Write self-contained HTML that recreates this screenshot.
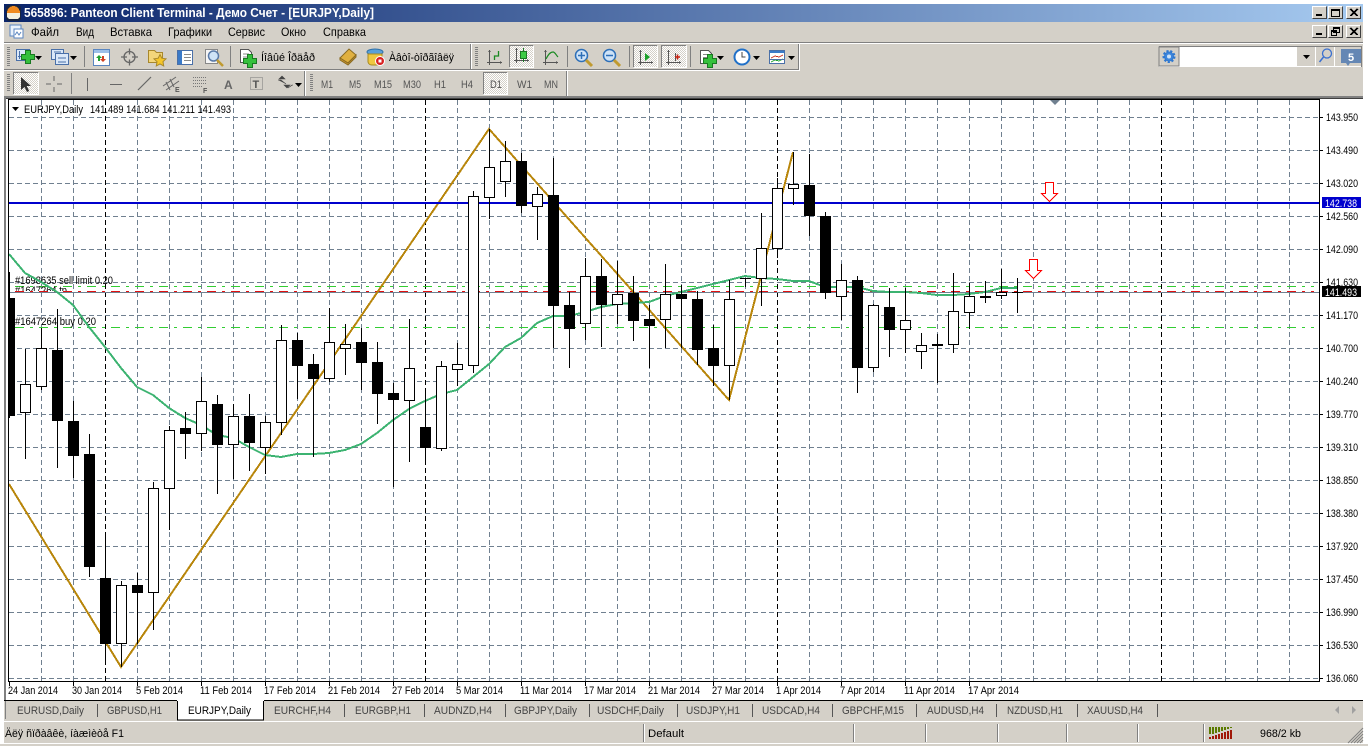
<!DOCTYPE html>
<html><head><meta charset="utf-8"><title>565896: Panteon Client Terminal</title>
<style>
html,body{margin:0;padding:0;background:#fff;overflow:hidden}
svg{display:block}
text{font-family:"Liberation Sans",sans-serif;font-size:11px;fill:#000}
.m{font-size:12px}
.g{fill:#555}
.t{fill:#444}
.c{shape-rendering:crispEdges}
</style></head><body>
<svg width="1368" height="746" viewBox="0 0 1368 746" xmlns="http://www.w3.org/2000/svg">
<defs>
<linearGradient id="tb" x1="0" x2="1" y1="0" y2="0"><stop offset="0" stop-color="#0a246a"/><stop offset="1" stop-color="#a6caf0"/></linearGradient>
<pattern id="d" width="2" height="2" patternUnits="userSpaceOnUse"><rect width="2" height="2" fill="#fff"/><rect width="1" height="1" fill="#d4d0c8"/><rect x="1" y="1" width="1" height="1" fill="#d4d0c8"/></pattern>
<clipPath id="tp"><rect x="14" y="285" width="60" height="6"/></clipPath>
<g id="plus"><path d="M-2.500-6.500h5v4h4v5h-4v4h-5v-4h-4v-5h4z" fill="#35c03c" stroke="#1a7a22"/></g>
<path id="dn" d="M0 0h7l-3.500 4z" fill="#000"/>
<g id="axes"><path d="M2.500 0v15M0 12.500h15" fill="none" stroke="#555"/><path d="M1 2l1.500-2 1.500 2zM13 11l2 1.500-2 1.500z" fill="#555"/></g>
<g id="mag"><circle cx="6.500" cy="6.500" r="6" fill="#cfe3f7" stroke="#2d6fb8" stroke-width="1.500"/><path d="M11 11l6 6" stroke="#c09a30" stroke-width="3"/></g>
</defs>

<rect width="1368" height="746" fill="#fff"/>
<rect x="4" y="4" width="1359" height="739" fill="#d4d0c8"/>
<rect x="4" y="743" width="1359" height="1" fill="#fff"/>
<rect x="0" y="744" width="1368" height="2" fill="#d4d0c8"/>

<!-- title bar -->
<rect x="4" y="4" width="1359" height="18" fill="url(#tb)"/>
<g class="c">
<rect x="6" y="5" width="15" height="16" rx="3" fill="#182440"/>
<path d="M7 13a6.500 7 0 0 1 13 0z" fill="#f08a20"/><path d="M7 13h13v3a3 3 0 0 1-3 3h-7a3 3 0 0 1-3-3z" fill="#f4f0e0"/>
</g>
<text x="24" y="17" textLength="350" lengthAdjust="spacingAndGlyphs" style="font-size:13px;font-weight:700;fill:#fff;font-family:'Liberation Sans','Noto Sans CJK SC',sans-serif">565896: Panteon Client Terminal - Демо Счет - [EURJPY,Daily]</text>

<!-- window buttons -->
<g class="c" fill="none">
<rect x="1312" y="6" width="15" height="13" fill="#d4d0c8"/><path d="M1312.500 18.500V6.500H1326.500" stroke="#fff"/><path d="M1312.500 18.500H1326.500V6.500" stroke="#404040"/><rect x="1316" y="14" width="6" height="2" fill="#000"/>
<rect x="1328" y="6" width="15" height="13" fill="#d4d0c8"/><path d="M1328.500 18.500V6.500H1342.500" stroke="#fff"/><path d="M1328.500 18.500H1342.500V6.500" stroke="#404040"/><path d="M1331.500 9.500h8v7h-8zM1331.500 10.500h8" stroke="#000"/>
<rect x="1346" y="6" width="15" height="13" fill="#d4d0c8"/><path d="M1346.500 18.500V6.500H1360.500" stroke="#fff"/><path d="M1346.500 18.500H1360.500V6.500" stroke="#404040"/><path d="M1350 9l7 7M1351 9l7 7M1357 9l-7 7M1358 9l-7 7" stroke="#000"/>
<rect x="1312" y="25" width="15" height="13" fill="#d4d0c8"/><path d="M1312.500 37.500V25.500H1326.500" stroke="#fff"/><path d="M1312.500 37.500H1326.500V25.500" stroke="#404040"/><rect x="1316" y="33" width="6" height="2" fill="#000"/>
<rect x="1328" y="25" width="15" height="13" fill="#d4d0c8"/><path d="M1328.500 37.500V25.500H1342.500" stroke="#fff"/><path d="M1328.500 37.500H1342.500V25.500" stroke="#404040"/><path d="M1333.500 27.500h6v5h-6zM1331.500 30.500h5v5h-5z" stroke="#000"/><path d="M1333 28.500h6M1331 31.500h5" stroke="#000"/>
<rect x="1346" y="25" width="15" height="13" fill="#d4d0c8"/><path d="M1346.500 37.500V25.500H1360.500" stroke="#fff"/><path d="M1346.500 37.500H1360.500V25.500" stroke="#404040"/><path d="M1350 28l7 7M1351 28l7 7M1357 28l-7 7M1358 28l-7 7" stroke="#000"/>
</g>

<!-- menu -->
<g>
<rect x="10" y="25" width="11" height="11" fill="#eaf2fb" stroke="#5b86c0"/><rect x="14" y="29" width="9" height="9" fill="#fff" stroke="#5b86c0"/><path d="M15 35l2-3 2 3 2-3" fill="none" stroke="#5b86c0"/>
<text class="m" x="31" y="36" textLength="28" lengthAdjust="spacingAndGlyphs">Файл</text>
<text class="m" x="76" y="36" textLength="18" lengthAdjust="spacingAndGlyphs">Вид</text>
<text class="m" x="110" y="36" textLength="42" lengthAdjust="spacingAndGlyphs">Вставка</text>
<text class="m" x="168" y="36" textLength="44" lengthAdjust="spacingAndGlyphs">Графики</text>
<text class="m" x="228" y="36" textLength="37" lengthAdjust="spacingAndGlyphs">Сервис</text>
<text class="m" x="281" y="36" textLength="25" lengthAdjust="spacingAndGlyphs">Окно</text>
<text class="m" x="323" y="36" textLength="43" lengthAdjust="spacingAndGlyphs">Справка</text>
</g>

<!-- toolbar chrome -->
<g class="c">
<rect x="4" y="42" width="1359" height="1" fill="#808080"/><rect x="4" y="43" width="1359" height="1" fill="#fff"/>
<rect x="4" y="69" width="795" height="1" fill="#808080"/><rect x="4" y="70" width="796" height="1" fill="#fff"/><rect x="799" y="44" width="1" height="26" fill="#fff"/><rect x="798" y="44" width="1" height="25" fill="#808080"/>
<rect x="305" y="71" width="1" height="25" fill="#fff"/><rect x="304" y="71" width="1" height="25" fill="#808080"/>
<rect x="566" y="71" width="1" height="25" fill="#808080"/><rect x="567" y="71" width="1" height="25" fill="#fff"/>
<!-- grips -->
<path d="M7 47.500h3M7 49.500h3M7 51.500h3M7 53.500h3M7 55.500h3M7 57.500h3M7 59.500h3M7 61.500h3M7 63.500h3M7 65.500h3M475 47.500h3M475 49.500h3M475 51.500h3M475 53.500h3M475 55.500h3M475 57.500h3M475 59.500h3M475 61.500h3M475 63.500h3M475 65.500h3M7 74.500h3M7 76.500h3M7 78.500h3M7 80.500h3M7 82.500h3M7 84.500h3M7 86.500h3M7 88.500h3M7 90.500h3M310 74.500h3M310 76.500h3M310 78.500h3M310 80.500h3M310 82.500h3M310 84.500h3M310 86.500h3M310 88.500h3M310 90.500h3" stroke="#808080"/>
<!-- separators -->
<path d="M84.500 46v21M230.500 46v21M567.500 46v21M629.500 46v21M690.500 46v21M71.500 73v21M470.500 44v25" stroke="#808080"/>
<path d="M471.500 44v25" stroke="#fff"/>
<!-- selected buttons -->
<rect x="509" y="45" width="25" height="23" fill="url(#d)"/><path d="M509.500 67.500V45.500H533.500" fill="none" stroke="#808080"/><path d="M509.500 67.500H533.500V45.500" fill="none" stroke="#fff"/>
<rect x="633" y="45" width="25" height="23" fill="url(#d)"/><path d="M633.500 67.500V45.500H657.500" fill="none" stroke="#808080"/><path d="M633.500 67.500H657.500V45.500" fill="none" stroke="#fff"/>
<rect x="661" y="45" width="26" height="23" fill="url(#d)"/><path d="M661.500 67.500V45.500H686.500" fill="none" stroke="#808080"/><path d="M661.500 67.500H686.500V45.500" fill="none" stroke="#fff"/>
<rect x="13" y="72" width="26" height="23" fill="url(#d)"/><path d="M13.500 94.500V72.500H38.500" fill="none" stroke="#808080"/><path d="M13.500 94.500H38.500V72.500" fill="none" stroke="#fff"/>
<rect x="483" y="72" width="25" height="23" fill="url(#d)"/><path d="M483.500 94.500V72.500H507.500" fill="none" stroke="#808080"/><path d="M483.500 94.500H507.500V72.500" fill="none" stroke="#fff"/>
</g>

<!-- toolbar 1 icons -->
<g>
<g class="c"><rect x="16.500" y="49.500" width="13" height="11" fill="#dbe8f8" stroke="#4a70a8"/><path d="M19.500 51v8M18 56.500h10" stroke="#4a70a8"/></g><use href="#plus" x="28" y="57"/>
<use href="#dn" x="35" y="56"/>
<g class="c"><rect x="51.500" y="49.500" width="12" height="10" fill="#dbe8f8" stroke="#4a70a8"/><rect x="55.500" y="53.500" width="13" height="11" fill="#dbe8f8" stroke="#4a70a8"/><path d="M54 52h7M58 58h8M58 62h8" stroke="#4a70a8"/></g>
<use href="#dn" x="70" y="56"/>
<g class="c"><rect x="93.500" y="49.500" width="16" height="16" fill="#fff" stroke="#5a86c0"/><rect x="94" y="50" width="15" height="3" fill="#9dbfe8"/></g>
<path d="M99 55l3 3h-2v3h-2v-3h-2z" fill="#22a030"/><path d="M103 62l-3-3h2v-3h2v3h2z" fill="#d04020"/>
<g fill="none" stroke="#666" stroke-width="1.300"><circle cx="129.500" cy="57" r="5.500"/><path d="M129.500 48.500v6M129.500 59.500v6M121 57h6M132 57h6"/></g>
<path d="M148.500 50.500h6l2 2h6v10h-14z" fill="#f3d67a" stroke="#a8882c"/><path d="M160 54.500l1.800 3.700 4.200.6-3 2.900.7 4.200-3.700-2-3.700 2 .7-4.200-3-2.900 4.200-.6z" fill="#f5c62a" stroke="#a8882c"/>
<g class="c"><rect x="177.500" y="50.500" width="15" height="14" fill="#fff" stroke="#4a70a8"/><rect x="178" y="51" width="4" height="13" fill="#3a7ac8"/><path d="M184 54.500h7M184 57.500h7M184 60.500h7" stroke="#8a8a8a"/></g>
<g class="c"><rect x="205.500" y="49.500" width="12" height="14" fill="#f6f6f6" stroke="#888"/></g><circle cx="213.500" cy="56" r="5" fill="#cfe3f7" stroke="#5a7aa8" stroke-width="1.500"/><path d="M217 60l6 6" stroke="#c09a30" stroke-width="2.500"/>
<g class="c"><path d="M240.500 49.500h8l3 3v10h-11z" fill="#fff" stroke="#555"/><path d="M243 54h6M243 57h6" stroke="#888"/></g><use href="#plus" x="250" y="61"/>
<text x="261" y="61" textLength="54" lengthAdjust="spacingAndGlyphs">Íîâûé Îðäåð</text>
<path d="M340 58l9-9 7 6-8 8z" fill="#e0b040" stroke="#8a6a20"/><path d="M340 58l8 5 8-8v2l-8 8-8-5z" fill="#c89530" stroke="#8a6a20"/>
<ellipse cx="375" cy="52" rx="8" ry="3" fill="#5aa0d8" stroke="#3070a8"/><path d="M368 54h14v8a4 4 0 0 1-4 3h-6a4 4 0 0 1-4-3z" fill="#f0c840" stroke="#a88a20"/><circle cx="380" cy="61" r="4.500" fill="#d82020" stroke="#fff"/><rect x="378.500" y="59.500" width="3" height="3" fill="#fff"/>
<text x="389" y="61" textLength="65" lengthAdjust="spacingAndGlyphs">Àâòî-òîðãîâëÿ</text>

<g transform="translate(487,50)"><use href="#axes"/><path d="M7.500 10V6h4V1" fill="none" stroke="#1a8a22" stroke-width="1.300"/></g>
<g transform="translate(514,48)"><use href="#axes"/><path d="M9.500 0v14" stroke="#1a7a22"/><rect x="6.500" y="3.500" width="6" height="7" fill="#3ccc44" stroke="#1a7a22"/></g>
<g transform="translate(543,50)"><use href="#axes"/><path d="M3 9c3-6 5-7 7-7s3 3 5 5" fill="none" stroke="#1a8a22" stroke-width="1.200"/></g>
<use href="#mag" x="575" y="49"/><path d="M578 55.500h7M581.500 52v7" stroke="#2d6fb8" stroke-width="1.500"/>
<use href="#mag" x="603" y="49"/><path d="M606 55.500h7" stroke="#2d6fb8" stroke-width="1.500"/>
<g transform="translate(638,50)"><use href="#axes"/><path d="M7 3v8l5-4z" fill="#1aa028"/></g>
<g transform="translate(666,50)"><use href="#axes"/><path d="M9.500 3v8" stroke="#555"/><path d="M9 7h5M11.500 4.500v5" stroke="#c82010" stroke-width="1.500"/></g>
<g class="c"><path d="M700.500 50.500h8l3 3v10h-11z" fill="#fff" stroke="#555"/><path d="M703 54.500h4M703 57.500h4" stroke="#888"/></g><use href="#plus" x="710" y="61"/>
<use href="#dn" x="717" y="56"/>
<circle cx="742" cy="57" r="7.500" fill="#fff" stroke="#2070c8" stroke-width="2"/><path d="M742 52v5h3.500" fill="none" stroke="#444"/>
<use href="#dn" x="753" y="56"/>
<g class="c"><rect x="769.500" y="50.500" width="15" height="13" fill="#fff" stroke="#4a70a8"/><rect x="770" y="51" width="14" height="2" fill="#3a7ac8"/><path d="M771 58l4-2 4 1 4-2" fill="none" stroke="#c83020"/><path d="M771 62l4-2 4 1 4-2" fill="none" stroke="#20a030"/><path d="M770 59.500h14" stroke="#4a70a8"/></g>
<use href="#dn" x="788" y="56"/>
</g>

<!-- toolbar 2 icons -->
<g>
<path d="M21 77v13l3.500-3 2.500 5 2.200-1-2.500-5h4.300z" fill="#333"/>
<path d="M54 76v5M54 87v5M46 84h5M57 84h5" stroke="#666" class="c"/>
<path d="M87.500 78v13" stroke="#666" class="c"/>
<path d="M110 84.500h12" stroke="#666" class="c"/>
<path d="M138 90l13-13" stroke="#666" stroke-width="1.200"/>
<path d="M163 86l13-9M166 90l13-9M166 82l4 8M170 79l4 8" stroke="#666" fill="none"/>
<text x="175" y="92" style="font-size:7px;font-weight:700;fill:#555">E</text>
<path d="M193 77.500h14M193 80.500h14M193 83.500h14M193 86.500h10" stroke="#777" stroke-dasharray="1 1" class="c"/>
<text x="203" y="93" style="font-size:7px;font-weight:700;fill:#555">F</text>
<text x="224" y="89" style="font-size:12px;font-weight:700;fill:#666">A</text>
<rect x="250.500" y="77.500" width="12" height="12" fill="none" stroke="#777" stroke-dasharray="1 1" class="c"/>
<text x="252.500" y="88" style="font-size:11px;font-weight:700;fill:#555">T</text>
<path d="M279 79l3-3 3 3zM284 85l3 3 3-3zM278 80h3l5 4M288 88l4-3 1 0" fill="#444" stroke="#444" stroke-width=".6"/>
<use href="#dn" x="295" y="83"/>
<text class="g" x="321" y="88" textLength="12" lengthAdjust="spacingAndGlyphs">M1</text>
<text class="g" x="349" y="88" textLength="12" lengthAdjust="spacingAndGlyphs">M5</text>
<text class="g" x="374" y="88" textLength="18" lengthAdjust="spacingAndGlyphs">M15</text>
<text class="g" x="403" y="88" textLength="18" lengthAdjust="spacingAndGlyphs">M30</text>
<text class="g" x="434" y="88" textLength="12" lengthAdjust="spacingAndGlyphs">H1</text>
<text class="g" x="461" y="88" textLength="12" lengthAdjust="spacingAndGlyphs">H4</text>
<text class="g" x="490" y="88" textLength="12" lengthAdjust="spacingAndGlyphs">D1</text>
<text class="g" x="517" y="88" textLength="15" lengthAdjust="spacingAndGlyphs">W1</text>
<text class="g" x="544" y="88" textLength="14" lengthAdjust="spacingAndGlyphs">MN</text>
</g>

<!-- search panel -->
<g class="c">
<rect x="1159" y="46" width="202" height="21" fill="#fff"/>
<rect x="1159" y="46" width="202" height="1" fill="#808080"/>
<rect x="1159" y="47" width="20" height="19" fill="#d4d0c8" stroke="#808080" stroke-width=".6"/>
<rect x="1297" y="47" width="18" height="19" fill="#d4d0c8"/>
<rect x="1316" y="47" width="18" height="19" fill="#d4d0c8"/>
<rect x="1335" y="47" width="26" height="19" fill="#d4d0c8"/>
<rect x="1361" y="46" width="1" height="21" fill="#808080"/>
</g>
<g>
<circle cx="1169" cy="56.500" r="5" fill="#2f78d0" stroke="#2f78d0" stroke-width="3" stroke-dasharray="2 1.500"/><circle cx="1169" cy="56.500" r="4" fill="#3d86dc"/><circle cx="1169" cy="56.500" r="2" fill="#cfe3f7"/>
<use href="#dn" x="1303" y="55"/>
<circle cx="1327" cy="53.500" r="4.500" fill="none" stroke="#3a70d0" stroke-width="1.300"/><path d="M1323.500 57l-4 5" stroke="#3a70d0" stroke-width="1.500"/>
<path d="M1341 49h20v14h-11l-2 3-2-3h-5z" fill="#6587b4"/>
<text x="1348" y="61" style="font-size:11px;font-weight:700;fill:#fff">5</text>
</g>

<!-- chart frame -->
<g class="c">
<rect x="4" y="96" width="1359" height="3" fill="#808080"/>
<rect x="4" y="98" width="1359" height="1" fill="#404040"/>
<rect x="4" y="96" width="2" height="604" fill="#808080"/>
<rect x="6" y="99" width="1357" height="601" fill="#fff"/>
</g>

<!-- grid -->
<g class="c" fill="none">
<path stroke="#708090" stroke-dasharray="5 3" d="M9 117.500H1319M9 150.500H1319M9 183.500H1319M9 216.500H1319M9 249.500H1319M9 282.500H1319M9 315.500H1319M9 348.500H1319M9 381.500H1319M9 414.500H1319M9 447.500H1319M9 480.500H1319M9 513.500H1319M9 546.500H1319M9 579.500H1319M9 612.500H1319M9 645.500H1319M9 678.500H1319"/>
<path stroke="#708090" stroke-dasharray="5 3" d="M41.500 100V681M73.500 100V681M137.500 100V681M169.500 100V681M201.500 100V681M233.500 100V681M265.500 100V681M297.500 100V681M329.500 100V681M361.500 100V681M393.500 100V681M457.500 100V681M489.500 100V681M521.500 100V681M553.500 100V681M585.500 100V681M617.500 100V681M649.500 100V681M681.500 100V681M713.500 100V681M745.500 100V681M809.500 100V681M841.500 100V681M873.500 100V681M905.500 100V681M937.500 100V681M969.500 100V681M1001.500 100V681M1033.500 100V681M1065.500 100V681M1097.500 100V681M1129.500 100V681M1193.500 100V681M1225.500 100V681M1257.500 100V681M1289.500 100V681"/>
<path stroke="#000" stroke-dasharray="5 3" d="M105.500 100V681M425.500 100V681M777.500 100V681M1161.500 100V681"/>
</g>

<!-- order lines -->
<g class="c" fill="none">
<path stroke="#32cd32" stroke-dasharray="9 6 3 6" d="M15 286.500H1314M15 327.500H1314"/>
<path stroke="#708090" d="M9 292.500H1319"/>
<path stroke="#e01010" stroke-dasharray="9 6 3 6" d="M15 291.500H1314"/>
</g>
<text x="15" y="284" textLength="98" lengthAdjust="spacingAndGlyphs">#1698635 sell limit 0.20</text>
<text x="15" y="294" textLength="52" lengthAdjust="spacingAndGlyphs" clip-path="url(#tp)">#1647264 tp</text>
<text x="15" y="325" textLength="81" lengthAdjust="spacingAndGlyphs">#1647264 buy 0.20</text>

<!-- indicators -->
<g class="c" fill="none" stroke-width="2">
<polyline stroke="#b8860b" points="9,484 121,667 489,129 729,400 793,152"/>
<polyline stroke="#3cb371" points="9,254 25,273 41,282 57,292 73,305 89,327 105,347 121,368 137,387 153,395 169,408 185,418 201,425 217,435 233,438 249,447 265,455 281,457 297,454 313,454 329,453 345,450 361,444 377,433 393,420 409,409 425,401 441,394 457,390 473,377 489,364 505,347 521,338 537,323 553,316 569,316 585,312 601,307 617,304 633,303 649,302 665,296 681,292 697,288 713,284 729,280 745,276 761,278 777,279 793,281 809,281 825,287 841,287 857,287 873,291 889,292 905,292 921,293 937,295 953,295 969,294 985,292 1001,288 1017,288"/>
<path stroke="#0000cd" d="M9 203H1319"/>
</g>

<!-- red arrows -->
<g class="c" fill="#fff" stroke="#f00">
<path d="M1045.500 182.500h8v11h4l-8 8-8-8h4z"/>
<path d="M1029.500 259.500h8v11h4l-8 8-8-8h4z"/>
</g>

<!-- candles -->
<g class="c">
<path stroke="#000" fill="none" d="M9.500 272V418M25.500 349V459M41.500 328V390M57.500 309V468M73.500 401V478M89.500 434V577M105.500 532V660M121.500 581V667M137.500 573V644M153.500 482V630M169.500 426V530M185.500 412V459M201.500 377V451M217.500 395V494M233.500 404V479M249.500 394V471M265.500 416V474M281.500 325V435M297.500 333V399M313.500 354V457M329.500 308V382M345.500 324V375M361.500 328V390M377.500 342V424M393.500 383V487M409.500 319V462M425.500 393V463M441.500 361V451M457.500 343V386M473.500 191V373M489.500 129V219M505.500 141V197M521.500 153V213M537.500 187V240M553.500 158V348M569.500 292V368M585.500 258V340M601.500 259V347M617.500 261V324M633.500 276V341M649.500 305V368M665.500 264V348M681.500 285V348M697.500 291V365M713.500 325V386M729.500 280V400M745.500 278V287M761.500 213V306M777.500 178V258M793.500 152V205M809.500 154V236M825.500 212V299M841.500 264V320M857.500 276V393M873.500 304V372M889.500 288V357M905.500 288V353M921.500 333V369M937.500 334V383M953.500 273V353M969.500 283V329M985.500 281V303M1001.500 269V299M1017.500 278V313"/>
<path fill="#fff" stroke="#000" d="M20.500 384.500h10v28h-10zM36.500 348.500h10v38h-10zM116.500 585.500h10v58h-10zM148.500 488.500h10v104h-10zM164.500 430.500h10v58h-10zM196.500 401.500h10v32h-10zM228.500 416.500h10v28h-10zM260.500 422.500h10v25h-10zM276.500 340.500h10v82h-10zM324.500 342.500h10v36h-10zM340.500 344.500h10v4h-10zM404.500 368.500h10v32h-10zM436.500 366.500h10v82h-10zM452.500 364.500h10v5h-10zM468.500 196.500h10v169h-10zM484.500 167.500h10v30h-10zM500.500 161.500h10v20h-10zM532.500 194.500h10v12h-10zM580.500 276.500h10v47h-10zM612.500 294.500h10v10h-10zM660.500 294.500h10v25h-10zM724.500 299.500h10v66h-10zM756.500 248.500h10v30h-10zM772.500 188.500h10v60h-10zM788.500 184.500h10v4h-10zM836.500 280.500h10v16h-10zM868.500 305.500h10v62h-10zM900.500 320.500h10v9h-10zM916.500 345.500h10v6h-10zM948.500 311.500h10v33h-10zM964.500 296.500h10v16h-10zM996.500 292.500h10v3h-10z"/>
<path fill="#000" d="M8 298h7v118h-7zM52 350h11v71h-11zM68 421h11v35h-11zM84 454h11v113h-11zM100 578h11v66h-11zM132 585h11v8h-11zM180 428h11v6h-11zM212 404h11v41h-11zM244 416h11v27h-11zM292 340h11v26h-11zM308 364h11v15h-11zM356 342h11v21h-11zM372 362h11v32h-11zM388 393h11v7h-11zM420 427h11v21h-11zM516 161h11v45h-11zM548 195h11v111h-11zM564 305h11v24h-11zM596 276h11v29h-11zM628 293h11v28h-11zM644 319h11v7h-11zM676 294h11v5h-11zM692 299h11v51h-11zM708 348h11v18h-11zM804 185h11v31h-11zM820 216h11v77h-11zM852 280h11v88h-11zM884 307h11v23h-11zM932 344h11v2h-11zM980 296h11v2h-11zM740 278h11v1h-11zM1012 292h11v1h-11z"/>
</g>

<!-- chart axes -->
<g class="c">
<rect x="8" y="99" width="1" height="583" fill="#000"/>
<rect x="8" y="99" width="1312" height="1" fill="#000"/>
<rect x="8" y="681" width="1312" height="1" fill="#000"/>
<rect x="1319" y="99" width="1" height="583" fill="#000"/>
<path stroke="#000" d="M1320 117.500h3M1320 150.500h3M1320 183.500h3M1320 216.500h3M1320 249.500h3M1320 282.500h3M1320 315.500h3M1320 348.500h3M1320 381.500h3M1320 414.500h3M1320 447.500h3M1320 480.500h3M1320 513.500h3M1320 546.500h3M1320 579.500h3M1320 612.500h3M1320 645.500h3M1320 678.500h3M9.500 682v4M73.500 682v4M137.500 682v4M201.500 682v4M265.500 682v4M329.500 682v4M393.500 682v4M457.500 682v4M521.500 682v4M585.500 682v4M649.500 682v4M713.500 682v4M777.500 682v4M841.500 682v4M905.500 682v4M969.500 682v4"/>
</g>
<path d="M1050 100h10l-5 5z" fill="#708090"/>

<!-- chart header -->
<path d="M12 107h7l-3.500 4z" fill="#000"/>
<text x="24" y="113" textLength="59" lengthAdjust="spacingAndGlyphs">EURJPY,Daily</text>
<text x="90" y="113" textLength="141" lengthAdjust="spacingAndGlyphs">141.489 141.684 141.211 141.493</text>

<!-- y axis labels -->
<g>
<text x="1326" y="121" textLength="32" lengthAdjust="spacingAndGlyphs">143.950</text>
<text x="1326" y="154" textLength="32" lengthAdjust="spacingAndGlyphs">143.490</text>
<text x="1326" y="187" textLength="32" lengthAdjust="spacingAndGlyphs">143.020</text>
<text x="1326" y="220" textLength="32" lengthAdjust="spacingAndGlyphs">142.560</text>
<text x="1326" y="253" textLength="32" lengthAdjust="spacingAndGlyphs">142.090</text>
<text x="1326" y="286" textLength="32" lengthAdjust="spacingAndGlyphs">141.630</text>
<text x="1326" y="319" textLength="32" lengthAdjust="spacingAndGlyphs">141.170</text>
<text x="1326" y="352" textLength="32" lengthAdjust="spacingAndGlyphs">140.700</text>
<text x="1326" y="385" textLength="32" lengthAdjust="spacingAndGlyphs">140.240</text>
<text x="1326" y="418" textLength="32" lengthAdjust="spacingAndGlyphs">139.770</text>
<text x="1326" y="451" textLength="32" lengthAdjust="spacingAndGlyphs">139.310</text>
<text x="1326" y="484" textLength="32" lengthAdjust="spacingAndGlyphs">138.850</text>
<text x="1326" y="517" textLength="32" lengthAdjust="spacingAndGlyphs">138.380</text>
<text x="1326" y="550" textLength="32" lengthAdjust="spacingAndGlyphs">137.920</text>
<text x="1326" y="583" textLength="32" lengthAdjust="spacingAndGlyphs">137.450</text>
<text x="1326" y="616" textLength="32" lengthAdjust="spacingAndGlyphs">136.990</text>
<text x="1326" y="649" textLength="32" lengthAdjust="spacingAndGlyphs">136.530</text>
<text x="1326" y="682" textLength="32" lengthAdjust="spacingAndGlyphs">136.060</text>
<rect class="c" x="1322" y="197" width="39" height="11" fill="#0000cd"/>
<text x="1325" y="207" textLength="32" lengthAdjust="spacingAndGlyphs" style="fill:#fff">142.738</text>
<rect class="c" x="1322" y="286" width="39" height="11" fill="#000"/>
<text x="1325" y="296" textLength="32" lengthAdjust="spacingAndGlyphs" style="fill:#fff">141.493</text>
</g>

<!-- x axis labels -->
<g>
<text x="8" y="694" textLength="50" lengthAdjust="spacingAndGlyphs">24 Jan 2014</text>
<text x="72" y="694" textLength="50" lengthAdjust="spacingAndGlyphs">30 Jan 2014</text>
<text x="136" y="694" textLength="47" lengthAdjust="spacingAndGlyphs">5 Feb 2014</text>
<text x="200" y="694" textLength="52" lengthAdjust="spacingAndGlyphs">11 Feb 2014</text>
<text x="264" y="694" textLength="52" lengthAdjust="spacingAndGlyphs">17 Feb 2014</text>
<text x="328" y="694" textLength="52" lengthAdjust="spacingAndGlyphs">21 Feb 2014</text>
<text x="392" y="694" textLength="52" lengthAdjust="spacingAndGlyphs">27 Feb 2014</text>
<text x="456" y="694" textLength="47" lengthAdjust="spacingAndGlyphs">5 Mar 2014</text>
<text x="520" y="694" textLength="52" lengthAdjust="spacingAndGlyphs">11 Mar 2014</text>
<text x="584" y="694" textLength="52" lengthAdjust="spacingAndGlyphs">17 Mar 2014</text>
<text x="648" y="694" textLength="52" lengthAdjust="spacingAndGlyphs">21 Mar 2014</text>
<text x="712" y="694" textLength="52" lengthAdjust="spacingAndGlyphs">27 Mar 2014</text>
<text x="776" y="694" textLength="45" lengthAdjust="spacingAndGlyphs">1 Apr 2014</text>
<text x="840" y="694" textLength="45" lengthAdjust="spacingAndGlyphs">7 Apr 2014</text>
<text x="904" y="694" textLength="51" lengthAdjust="spacingAndGlyphs">11 Apr 2014</text>
<text x="968" y="694" textLength="51" lengthAdjust="spacingAndGlyphs">17 Apr 2014</text>
</g>

<!-- tabs -->
<g class="c">
<rect x="4" y="700" width="1359" height="1" fill="#000"/>
<rect x="4" y="721" width="1359" height="1" fill="#fff"/>
<rect x="5" y="701" width="1" height="18" fill="#808080"/>
<rect x="177" y="700" width="87" height="20" fill="#fff"/>
<path d="M177.500 701v19H263.500V701" fill="none" stroke="#000"/>
<path d="M97.500 704v13M344.500 704v13M424.500 704v13M505.500 704v13M589.500 704v13M677.500 704v13M752.500 704v13M832.500 704v13M916.500 704v13M996.500 704v13M1077.500 704v13M1157.500 704v13" stroke="#555"/>
</g>
<g>
<text class="t" x="17" y="714" textLength="67" lengthAdjust="spacingAndGlyphs">EURUSD,Daily</text>
<text class="t" x="107" y="714" textLength="55" lengthAdjust="spacingAndGlyphs">GBPUSD,H1</text>
<text x="188" y="714" textLength="63" lengthAdjust="spacingAndGlyphs">EURJPY,Daily</text>
<text class="t" x="274" y="714" textLength="57" lengthAdjust="spacingAndGlyphs">EURCHF,H4</text>
<text class="t" x="355" y="714" textLength="56" lengthAdjust="spacingAndGlyphs">EURGBP,H1</text>
<text class="t" x="434" y="714" textLength="58" lengthAdjust="spacingAndGlyphs">AUDNZD,H4</text>
<text class="t" x="514" y="714" textLength="63" lengthAdjust="spacingAndGlyphs">GBPJPY,Daily</text>
<text class="t" x="597" y="714" textLength="67" lengthAdjust="spacingAndGlyphs">USDCHF,Daily</text>
<text class="t" x="686" y="714" textLength="54" lengthAdjust="spacingAndGlyphs">USDJPY,H1</text>
<text class="t" x="762" y="714" textLength="58" lengthAdjust="spacingAndGlyphs">USDCAD,H4</text>
<text class="t" x="842" y="714" textLength="62" lengthAdjust="spacingAndGlyphs">GBPCHF,M15</text>
<text class="t" x="927" y="714" textLength="57" lengthAdjust="spacingAndGlyphs">AUDUSD,H4</text>
<text class="t" x="1007" y="714" textLength="56" lengthAdjust="spacingAndGlyphs">NZDUSD,H1</text>
<text class="t" x="1087" y="714" textLength="56" lengthAdjust="spacingAndGlyphs">XAUUSD,H4</text>
<path d="M1339 706l-4 4 4 4zM1352 706l4 4-4 4z" fill="#a0a0a0"/>
</g>

<!-- status bar -->
<g>
<text x="5" y="737" textLength="119" lengthAdjust="spacingAndGlyphs">Äëÿ ñïðàâêè, íàæìèòå F1</text>
<text x="648" y="737" textLength="36" lengthAdjust="spacingAndGlyphs">Default</text>
<text x="1260" y="737" textLength="41" lengthAdjust="spacingAndGlyphs">968/2 kb</text>
<g class="c">
<path d="M643.500 724v18M853.500 724v18M925.500 724v18M997.500 724v18M1066.500 724v18M1137.500 724v18M1203.500 724v18" stroke="#808080"/>
<path d="M644.500 724v18M854.500 724v18M926.500 724v18M998.500 724v18M1067.500 724v18M1138.500 724v18M1204.500 724v18" stroke="#fff"/>
<path d="M1209 727h2v7h-2zM1212 727h2v7h-2zM1215 727h2v6h-2zM1218 727h2v5h-2zM1221 727h2v4h-2zM1224 727h2v3h-2zM1227 727h2v2h-2zM1230 727h2v1h-2z" fill="#5a7a00"/>
<path d="M1209 737h2v2h-2zM1212 736h2v3h-2zM1215 735h2v4h-2zM1218 734h2v5h-2zM1221 733h2v6h-2zM1224 732h2v7h-2zM1227 731h2v8h-2zM1230 730h2v9h-2z" fill="#a01808"/>
</g>
<path d="M1348 743l15-15M1351 743l12-12M1354 743l9-9M1357 743l6-6M1360 743l3-3" stroke="#808080"/>
</g>
</svg>
</body></html>
